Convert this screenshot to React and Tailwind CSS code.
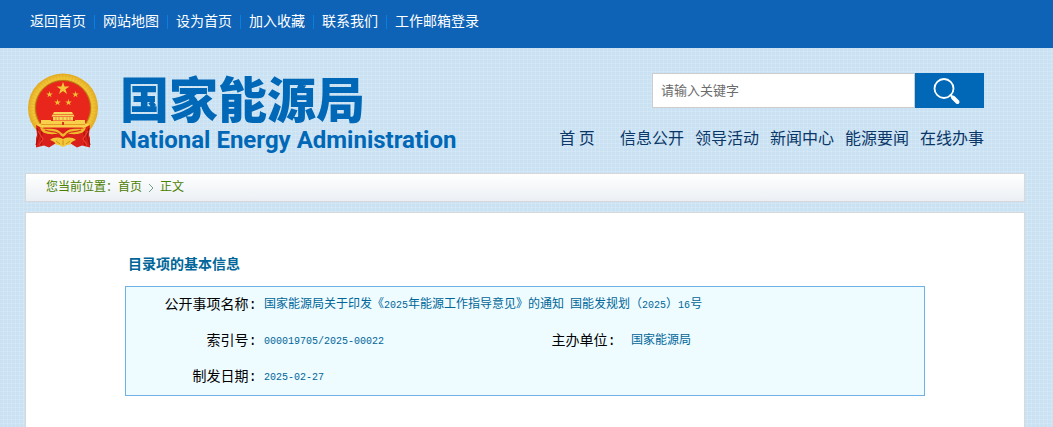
import React, { useState } from "react";

const topLinks = ["返回首页", "网站地图", "设为首页", "加入收藏", "联系我们", "工作邮箱登录"];
const navLinks = ["首 页", "信息公开", "领导活动", "新闻中心", "能源要闻", "在线办事"];

const star = (cx, cy, r) =>
  Array.from({ length: 10 }, (_, i) => {
    const radius = i % 2 ? r * 0.38 : r;
    const angle = (Math.PI / 5) * i - Math.PI / 2;
    return `${cx + radius * Math.cos(angle)},${cy + radius * Math.sin(angle)}`;
  }).join(" ");

const Emblem = () => (
  <svg viewBox="0 0 70 76" className="mt-px h-[76px] w-[70px] shrink-0" role="img" aria-label="国徽">
    <defs>
      <radialGradient id="ring" cx="50%" cy="50%" r="50%">
        <stop offset="76%" stopColor="#c98a12" />
        <stop offset="84%" stopColor="#f3c838" />
        <stop offset="93%" stopColor="#eab92f" />
        <stop offset="100%" stopColor="#e3a81c" />
      </radialGradient>
    </defs>
    <ellipse cx="35" cy="35" rx="35" ry="34.5" fill="url(#ring)" />
    <ellipse cx="35" cy="34.5" rx="31" ry="30.5" fill="none" stroke="#d79b1a" strokeWidth="5" strokeDasharray="1 2.2" opacity=".25" />
    <circle cx="35" cy="35" r="27.5" fill="#e8261c" stroke="#b97712" strokeWidth="1" />
    <polygon points={star(35, 15.5, 6.8)} fill="#f3c838" />
    <polygon points={star(21.5, 21.5, 3.5)} fill="#f3bf35" />
    <polygon points={star(47.5, 21.5, 3.5)} fill="#f3bf35" />
    <polygon points={star(29.5, 29.5, 3.5)} fill="#f3bf35" />
    <polygon points={star(40.5, 29.5, 3.5)} fill="#f3bf35" />
    <path d="M26 39h18l1 2H25zM23.500 43.500l1-2h21l1 2zM25 44h20v3.500H25z" fill="#f8d65a" />
    <path d="M28 44v3M31 44v3M35 44v3M39 44v3M42 44v3" stroke="#dd6a22" strokeWidth=".6" />
    <path d="M13 47h10v1h24v-1h10v3.500l4 1-2 3H11l-2-3 4-1z" fill="#f8d04a" />
    <path d="M13 51.500h44" stroke="#e08a20" strokeWidth=".8" />
    <path d="M34 49h2v3h-2z" fill="#d8331c" />
    <path d="M8 52l6 3h42l6-3-1 10 1 3 0 9.500-8-2-5 2-8-5H29l-8 5-5-2-8 2L8 65l1-3z" fill="#d9201a" />
    <path d="M9 55l2 8-3 9M61 55l-2 8 3 9M14 58l-1 14M56 58l1 14" fill="none" stroke="#a8120f" strokeWidth="1.200" />
    <path d="M12 54c5 3 8 1 13 2 5 0 7 3 10 5 3-2 5-5 10-5 5-1 8 1 13-2-1 5-5 7-10 7-5 1-7-2-13 3-6-5-8-2-13-3-5 0-9-2-10-7z" fill="#efb92e" />
    <path d="M17 57c6 3 11 0 15 5M53 57c-6 3-11 0-15 5" fill="none" stroke="#d8331c" strokeWidth="1.300" />
    <path d="M22 67c4-3 8-3 13-1 5-2 9-2 13 1-3 1-5 2-6 5-3-1-4 1-7 2-3-1-4-3-7-2-1-3-3-4-6-5z" fill="#f3c838" />
    <path d="M28 68l4 3M42 68l-4 3M35 67v5" stroke="#c97c14" strokeWidth=".8" />
    <path d="M10 58l5 8-4 6M60 58l-5 8 4 6" fill="none" stroke="#f04030" strokeWidth="1.200" />
  </svg>
);

const Num = ({ children }) => <span className="text-[10px]">{children}</span>;

const SearchForm = () => {
  const [keyword, setKeyword] = useState("");

  return (
    <form onSubmit={(e) => e.preventDefault()} className="flex">
      <input
        type="text"
        aria-label="请输入关键字"
        className="h-[35px] w-[263px] border border-[#cccccc] bg-white px-2 pt-0.5 text-[13px] text-[#333333] placeholder:text-[#6b6b6b] focus:outline-none"
        placeholder="请输入关键字"
        value={keyword}
        onChange={(e) => setKeyword(e.target.value)}
      />
      <button type="submit" aria-label="搜索" className="flex h-[35px] w-[69px] items-center bg-[#0068b7] pl-[18px]">
        <svg viewBox="0 0 28 28" className="size-7" fill="none" stroke="#fff" strokeLinecap="round">
          <circle cx="11" cy="11.500" r="9.500" strokeWidth="1.800" />
          <path d="M17.500 18l2 2" strokeWidth="2" />
          <path d="M20 20.500l4.500 4.500" strokeWidth="4" />
        </svg>
      </button>
    </form>
  );
};

const App = () => {
  return (
    <div className="flex min-h-screen flex-col bg-[#d7eaf8] bg-[repeating-linear-gradient(90deg,#a6c8e21f_0px,#a6c8e21f_3px,transparent_3px,transparent_4px),repeating-linear-gradient(0deg,#a6c8e226_0px,#a6c8e226_3px,transparent_3px,transparent_4px)] font-['Liberation_Mono','Noto_Sans_CJK_SC',sans-serif]">
      <div className="h-12 bg-[#0e63b6] pt-3 pl-[22px]">
        <ul className="flex items-center text-sm text-white">
          {topLinks.map((text, i) => (
            <li key={text} className="flex items-center">
              {i > 0 && <span className="h-3.5 w-px bg-[#0a7fdd]"></span>}
              <a href="#" className="px-2">{text}</a>
            </li>
          ))}
        </ul>
      </div>

      <div className="flex flex-1 flex-col pr-7 pl-[25px]">
        <header className="flex h-[125px] justify-between pt-6 pr-[41px] pl-[3px]">
          <div className="flex">
            <Emblem />
            <div className="ml-[22px] whitespace-nowrap text-[#0068b7]">
              <h1 className="font-['Noto_Sans_CJK_SC',sans-serif] text-[49px] leading-[50px] font-black">国家能源局</h1>
              <p className="mt-1 font-['Roboto',sans-serif] text-2xl leading-7 font-bold">National Energy Administration</p>
            </div>
          </div>
          <div className="flex flex-col items-end pt-px">
            <SearchForm />
            <nav className="mt-[17px] flex gap-[11px] font-['Noto_Sans_CJK_SC',sans-serif] text-base text-[#0b3768]">
              {navLinks.map((text) => (
                <a key={text} href="#" className="w-16 text-center whitespace-nowrap">{text}</a>
              ))}
            </nav>
          </div>
        </header>

        <div className="flex h-[29px] items-center border border-[#d6d8da] bg-linear-to-b from-white to-[#ebeff4] pl-5 text-xs text-[#4a8000]">
          <span>您当前位置：</span>
          <a href="#">首页</a>
          <svg viewBox="0 0 18 12" className="h-3 w-[18px]" fill="none" stroke="#6fa586">
            <path d="M7 2l4 4-4 4" />
          </svg>
          <span>正文</span>
        </div>

        <main className="mt-2.5 flex-1 border border-b-0 border-[#d6d8da] bg-white px-[99px] pt-[42px]">
          <h2 className="pl-[3px] text-sm font-bold text-[#006699]">目录项的基本信息</h2>
          <div className="mt-[11px] border border-[#6fb0e5] bg-[#eefbff]">
            <table className="w-full table-fixed text-left text-xs text-[#006699]">
              <colgroup>
                <col className="w-[132px]" />
                <col className="w-[249px]" />
                <col className="w-[110px]" />
                <col />
              </colgroup>
              <tbody>
                <tr className="h-9">
                  <th scope="row" className="pr-px text-right text-sm font-normal text-black">公开事项名称:</th>
                  <td colSpan="3" className="pl-1.5">
                    国家能源局关于印发《<Num>2025</Num>年能源工作指导意见》的通知<Num> </Num>国能发规划（<Num>2025</Num>）<Num>16</Num>号
                  </td>
                </tr>
                <tr className="h-9">
                  <th scope="row" className="pr-px text-right text-sm font-normal text-black">索引号:</th>
                  <td className="pl-1.5"><Num>000019705/2025-00022</Num></td>
                  <th scope="row" className="pr-px text-right text-sm font-normal text-black">主办单位:</th>
                  <td className="pl-3.5">国家能源局</td>
                </tr>
                <tr className="h-9">
                  <th scope="row" className="pr-px text-right text-sm font-normal text-black">制发日期:</th>
                  <td colSpan="3" className="pl-1.5"><Num>2025-02-27</Num></td>
                </tr>
              </tbody>
            </table>
          </div>
        </main>
      </div>
    </div>
  );
};

export default App;
